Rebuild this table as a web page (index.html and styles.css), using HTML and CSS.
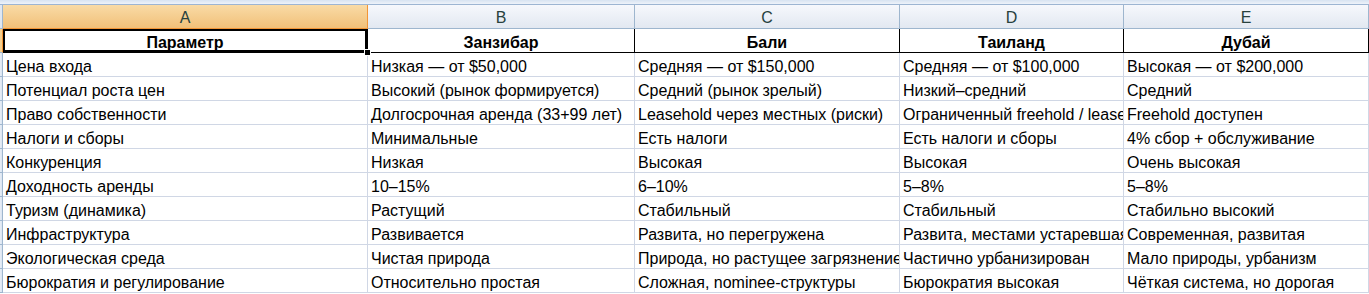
FILE: index.html
```html
<!DOCTYPE html>
<html lang="ru">
<head>
<meta charset="utf-8">
<title>Сравнение рынков</title>
<link rel="stylesheet" href="styles.css">
</head>
<body>
<div class="topstrip"></div>
<div class="sheet">
  <div class="rh corner"></div>
  <div class="ch sel">A</div>
  <div class="ch">B</div>
  <div class="ch">C</div>
  <div class="ch">D</div>
  <div class="ch">E</div>

  <div class="rh rsel"></div>
  <div class="c head active">Параметр<span class="handle"></span></div>
  <div class="c head">Занзибар</div>
  <div class="c head">Бали</div>
  <div class="c head">Таиланд</div>
  <div class="c head">Дубай</div>

  <div class="rh"></div>
  <div class="c">Цена входа</div>
  <div class="c">Низкая — от $50,000</div>
  <div class="c">Средняя — от $150,000</div>
  <div class="c">Средняя — от $100,000</div>
  <div class="c">Высокая — от $200,000</div>

  <div class="rh"></div>
  <div class="c">Потенциал роста цен</div>
  <div class="c">Высокий (рынок формируется)</div>
  <div class="c">Средний (рынок зрелый)</div>
  <div class="c">Низкий–средний</div>
  <div class="c">Средний</div>

  <div class="rh"></div>
  <div class="c">Право собственности</div>
  <div class="c">Долгосрочная аренда (33+99 лет)</div>
  <div class="c">Leasehold через местных (риски)</div>
  <div class="c">Ограниченный freehold / leasehold</div>
  <div class="c">Freehold доступен</div>

  <div class="rh"></div>
  <div class="c">Налоги и сборы</div>
  <div class="c">Минимальные</div>
  <div class="c">Есть налоги</div>
  <div class="c">Есть налоги и сборы</div>
  <div class="c">4% сбор + обслуживание</div>

  <div class="rh"></div>
  <div class="c">Конкуренция</div>
  <div class="c">Низкая</div>
  <div class="c">Высокая</div>
  <div class="c">Высокая</div>
  <div class="c">Очень высокая</div>

  <div class="rh"></div>
  <div class="c">Доходность аренды</div>
  <div class="c">10–15%</div>
  <div class="c">6–10%</div>
  <div class="c">5–8%</div>
  <div class="c">5–8%</div>

  <div class="rh"></div>
  <div class="c">Туризм (динамика)</div>
  <div class="c">Растущий</div>
  <div class="c">Стабильный</div>
  <div class="c">Стабильный</div>
  <div class="c">Стабильно высокий</div>

  <div class="rh"></div>
  <div class="c">Инфраструктура</div>
  <div class="c">Развивается</div>
  <div class="c">Развита, но перегружена</div>
  <div class="c">Развита, местами устаревшая</div>
  <div class="c">Современная, развитая</div>

  <div class="rh"></div>
  <div class="c">Экологическая среда</div>
  <div class="c">Чистая природа</div>
  <div class="c">Природа, но растущее загрязнение</div>
  <div class="c">Частично урбанизирован</div>
  <div class="c">Мало природы, урбанизм</div>

  <div class="rh"></div>
  <div class="c">Бюрократия и регулирование</div>
  <div class="c">Относительно простая</div>
  <div class="c">Сложная, nominee-структуры</div>
  <div class="c">Бюрократия высокая</div>
  <div class="c">Чёткая система, но дорогая</div>
</div>
</body>
</html>
```

FILE: styles.css
```css
html, body {
  margin: 0;
  padding: 0;
  background: #ffffff;
  overflow: hidden;
}

body {
  font-family: "Liberation Sans", Arial, sans-serif;
  font-size: 16px;
  color: #000;
  width: 1369px;
  height: 294px;
}

.topstrip {
  height: 4px;
  background: linear-gradient(#d7e3f1, #eef3fa);
  border-bottom: 1px solid #9db5d2;
}

.sheet {
  display: grid;
  grid-template-columns: 3px 365px 267px 265px 224px 1fr;
  grid-auto-rows: 24px;
}

.rh {
  background: linear-gradient(90deg, #e8eef7, #d9e3f0);
  border-right: 1px solid #9eb6ce;
  border-bottom: 1px solid #9eb6ce;
  box-sizing: border-box;
}

.rh.corner {
  background: #dfe7f2;
}

.rh.rsel {
  background: #f6cf8e;
  border-right-color: #f29536;
}

.ch {
  box-sizing: border-box;
  border-right: 1px solid #9eb6ce;
  border-bottom: 1px solid #9eb6ce;
  background: linear-gradient(#f6f8fc, #e2e8f1);
  color: #27413e;
  display: flex;
  align-items: center;
  justify-content: center;
  padding-top: 3px;
}

.ch.sel {
  background: linear-gradient(#f9dba6, #f1c079);
  border-bottom-color: #f29536;
  border-right-color: #f29536;
}

.c {
  box-sizing: border-box;
  border-right: 1px solid #d0d7e5;
  border-bottom: 1px solid #d0d7e5;
  padding: 0 3px 0 3px;
  white-space: nowrap;
  overflow: hidden;
  text-overflow: clip;
  display: flex;
  align-items: flex-end;
  line-height: 18px;
  position: relative;
}

.c.head {
  font-weight: bold;
  justify-content: center;
  border-right: 1px solid #000;
  border-bottom: 1px solid #000;
  overflow: visible;
}

.c.active {
  box-shadow: inset 0 0 0 2px #000;
  border-left: 0;
}

.handle {
  position: absolute;
  right: -4px;
  bottom: -4px;
  width: 5px;
  height: 5px;
  background: #000;
  border: 1px solid #fff;
  z-index: 2;
}
```
